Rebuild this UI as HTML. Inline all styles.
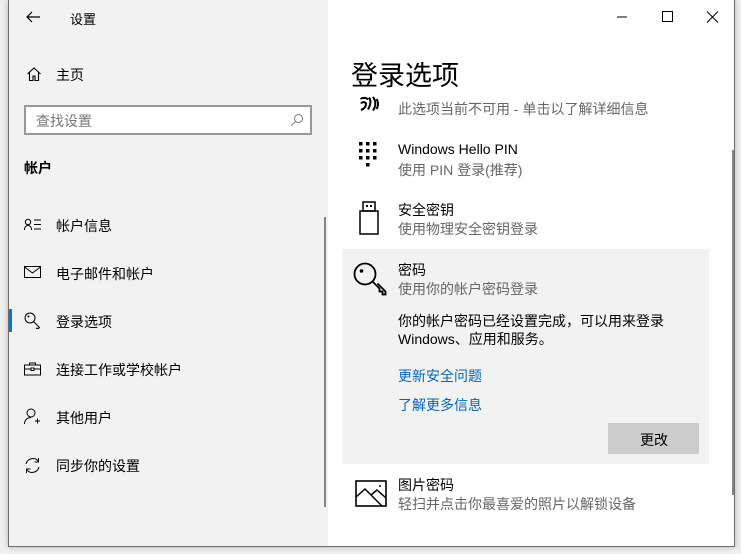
<!DOCTYPE html>
<html><head><meta charset="utf-8"><style>
*{margin:0;padding:0;box-sizing:border-box}
body{width:741px;height:554px;background:#f0f0f0;font-family:"Liberation Sans","Noto Sans CJK SC",sans-serif;position:relative;overflow:hidden;color:#000}
.win{position:absolute;left:8px;top:0;width:727px;height:547px;border:1px solid #6e6e6e;border-top:none;background:#fff;box-shadow:0 0 6px rgba(0,0,0,.25)}
.left{position:absolute;left:0;top:0;width:319px;height:546px;background:#f2f2f2}
.t{position:absolute;white-space:nowrap}
.s14{font-size:14px}
.g{color:#666}
.ic{position:absolute}
.lnk{color:#0067c0;font-size:14px}
</style></head><body>
<div class="win">
<div class="left">
 <svg class="ic" style="left:16px;top:10px" width="16" height="14"><path d="M15 7H2M7 2L2 7l5 5" fill="none" stroke="#000" stroke-width="1.2"/></svg>
 <div class="t" style="left:61px;top:9px;font-size:13px">设置</div>
 <svg class="ic" style="left:17px;top:66px" width="16" height="16"><path d="M1.5 8L8 2l6.5 6M3.5 6.5V14.5h3.5V10h2v4.5h3.5V6.5" fill="none" stroke="#000" stroke-width="1.1"/></svg>
 <div class="t s14" style="left:47px;top:65px">主页</div>
 <div style="position:absolute;left:15px;top:105px;width:288px;height:30px;border:2px solid #999;background:#fff"></div>
 <div class="t s14" style="left:27px;top:111px;color:#777">查找设置</div>
 <svg class="ic" style="left:281px;top:113px" width="14" height="14"><circle cx="8.5" cy="5.5" r="4" fill="none" stroke="#777"/><path d="M5.5 8.5L1.5 12.5" stroke="#777"/></svg>
 <div class="t s14" style="left:15px;top:158px;font-weight:bold">帐户</div>
 <svg class="ic" style="left:15px;top:218px" width="18" height="14"><circle cx="4" cy="4" r="2.7" fill="none" stroke="#000"/><path d="M.5 12c0-3 1.5-4.5 3.5-4.5S7.5 9 7.5 12M10 2h7M10 6.5h7M10 11h7" fill="none" stroke="#000"/></svg>
 <div class="t s14" style="left:47px;top:216px">帐户信息</div>
 <svg class="ic" style="left:15px;top:266px" width="17" height="13"><rect x=".5" y=".5" width="16" height="11" fill="none" stroke="#000"/><path d="M.5 1l8 6 8-6" fill="none" stroke="#000"/></svg>
 <div class="t s14" style="left:47px;top:264px">电子邮件和帐户</div>
 <div style="position:absolute;left:0;top:309px;width:3px;height:23px;background:#0078d7"></div>
 <svg class="ic" style="left:15px;top:312px" width="17" height="17"><circle cx="6" cy="6" r="5" fill="none" stroke="#000"/><circle cx="4.5" cy="4.5" r="1" fill="#000"/><path d="M9.5 9.5l6 6-1.5 1.5-1-1-1 1" fill="none" stroke="#000"/></svg>
 <div class="t s14" style="left:47px;top:312px">登录选项</div>
 <svg class="ic" style="left:15px;top:362px" width="17" height="14"><rect x=".5" y="3" width="16" height="10" fill="none" stroke="#000"/><path d="M5.5 3V1h6v2M.5 7h16" fill="none" stroke="#000"/><rect x="7" y="6" width="3" height="2.5" fill="#fff" stroke="#000"/></svg>
 <div class="t s14" style="left:47px;top:360px">连接工作或学校帐户</div>
 <svg class="ic" style="left:15px;top:408px" width="17" height="17"><circle cx="7" cy="5" r="4" fill="none" stroke="#000"/><path d="M.5 16c0-4 3-6.5 6.5-6.5M11 13h5M13.5 10.5v5" fill="none" stroke="#000"/></svg>
 <div class="t s14" style="left:47px;top:408px">其他用户</div>
 <svg class="ic" style="left:15px;top:457px" width="17" height="17"><path d="M2 7A7 7 0 0 1 14.5 4.5M15 10A7 7 0 0 1 2.5 12.5M14.5 1v4h-4M2.5 16v-4h4" fill="none" stroke="#000"/></svg>
 <div class="t s14" style="left:47px;top:456px">同步你的设置</div>
 <div style="position:absolute;left:315px;top:217px;width:2px;height:290px;background:#858585"></div>
</div>
<svg class="ic" style="left:608px;top:10px" width="110" height="14"><path d="M0 7h10" stroke="#000"/><rect x="45.5" y="1.5" width="10" height="10" fill="none" stroke="#000"/><path d="M90 1.5l11 11M101 1.5l-11 11" stroke="#000"/></svg>
<div class="t" style="left:342px;top:54px;font-size:27px">登录选项</div>
<svg class="ic" style="left:350px;top:96px" width="20" height="18"><path d="M1.5 3A5 4 0 0 1 9 3.5M2 7.5A3 3 0 0 1 7 7.5C7 11 5 13 2 14M4.5 10.5M10 1.5C12 4 12 8 9 13.5M14 1c3 4 3 9 0 13.5M17.5 3c2 3 2 7 0 10" fill="none" stroke="#000" stroke-width="2"/></svg>
<div class="t s14 g" style="left:389px;top:99px">此选项当前不可用 - 单击以了解详细信息</div>
<svg class="ic" style="left:350px;top:142px" width="22" height="32"><g fill="#000"><rect x="0" y="0" width="3.5" height="3.5"/><rect x="7" y="0" width="3.5" height="3.5"/><rect x="14" y="0" width="3.5" height="3.5"/><rect x="0" y="7" width="3.5" height="3.5"/><rect x="7" y="7" width="3.5" height="3.5"/><rect x="14" y="7" width="3.5" height="3.5"/><rect x="0" y="14" width="3.5" height="3.5"/><rect x="7" y="14" width="3.5" height="3.5"/><rect x="14" y="14" width="3.5" height="3.5"/><rect x="7" y="21" width="3.5" height="3.5"/></g></svg>
<div class="t s14" style="left:389px;top:141px">Windows Hello PIN</div>
<div class="t s14 g" style="left:389px;top:160px">使用 PIN 登录(推荐)</div>
<svg class="ic" style="left:350px;top:201px" width="20" height="34"><rect x="4" y="1" width="12" height="9" fill="none" stroke="#000" stroke-width="1.5"/><rect x="7" y="4" width="2" height="2"/><rect x="11" y="4" width="2" height="2"/><rect x="1" y="10" width="18" height="23" fill="none" stroke="#000" stroke-width="1.5"/></svg>
<div class="t s14" style="left:389px;top:200px">安全密钥</div>
<div class="t s14 g" style="left:389px;top:219px">使用物理安全密钥登录</div>
<div style="position:absolute;left:333px;top:249px;width:367px;height:215px;background:#f2f2f2"></div>
<svg class="ic" style="left:344px;top:262px" width="36" height="36"><circle cx="12" cy="12" r="10.5" fill="none" stroke="#000" stroke-width="1.8"/><circle cx="8.5" cy="9" r="1.8" fill="#000"/><path d="M19.5 19.5l7 7v3l3 0 0 3h3v-3l-8-8" fill="none" stroke="#000" stroke-width="1.8" stroke-linejoin="miter"/></svg>
<div class="t s14" style="left:389px;top:260px">密码</div>
<div class="t s14 g" style="left:389px;top:279px">使用你的帐户密码登录</div>
<div class="t s14" style="left:389px;top:311px">你的帐户密码已经设置完成，可以用来登录</div>
<div class="t s14" style="left:389px;top:329px">Windows、应用和服务。</div>
<div class="t lnk" style="left:389px;top:366px">更新安全问题</div>
<div class="t lnk" style="left:389px;top:395px">了解更多信息</div>
<div style="position:absolute;left:599px;top:423px;width:91px;height:31px;background:#ccc"></div>
<div class="t s14" style="left:631px;top:430px">更改</div>
<svg class="ic" style="left:346px;top:480px" width="32" height="28"><rect x="1" y="1" width="30" height="25" fill="none" stroke="#000" stroke-width="1.6"/><path d="M1 17l9-8 17 17M16 15l6-5 9 8" fill="none" stroke="#000" stroke-width="1.5"/><circle cx="25" cy="6" r="1" fill="#000"/></svg>
<div class="t s14" style="left:389px;top:475px">图片密码</div>
<div class="t s14 g" style="left:389px;top:494px">轻扫并点击你最喜爱的照片以解锁设备</div>
<div style="position:absolute;left:723px;top:150px;width:2px;height:345px;background:#858585"></div>
</div>
</body></html>
